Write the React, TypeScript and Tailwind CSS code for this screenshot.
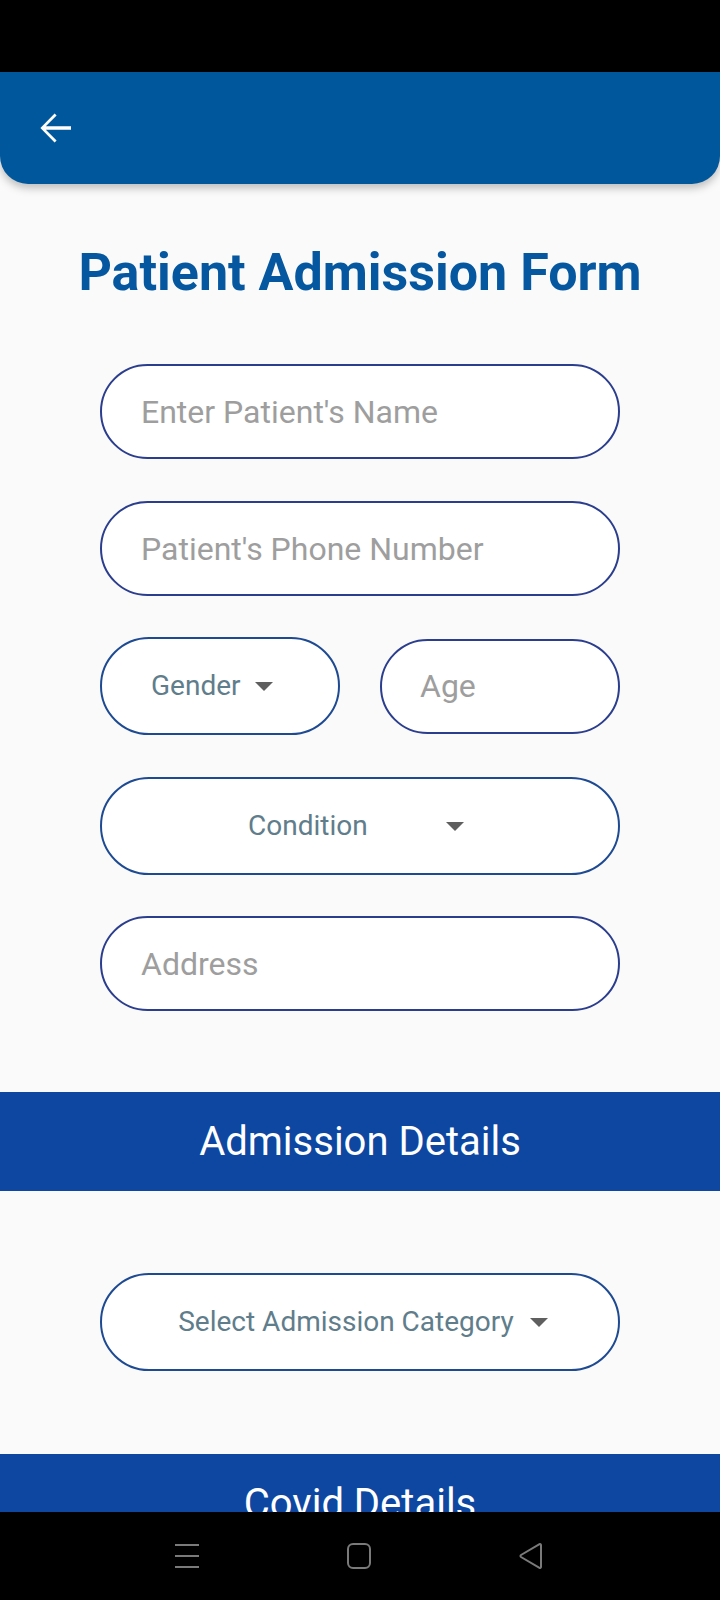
import React from "react";

const font = { fontFamily: "Roboto, 'Noto Sans', sans-serif" };

function DropArrow() {
  return (
    <svg width="18" height="9" viewBox="0 0 18 9" className="shrink-0">
      <path d="M0 0h18L9 9z" fill="#5f5f5f" />
    </svg>
  );
}

function TextField({ placeholder }: { placeholder: string }) {
  return (
    <div className="w-[520px] h-[95px] mx-auto rounded-full border-2 border-[#2b3d8d] bg-white flex items-center pl-[39px]">
      <span className="text-[32px] text-[#9e9e9e]">{placeholder}</span>
    </div>
  );
}

function Banner({ title }: { title: string }) {
  return (
    <div className="h-[99px] w-full bg-[#0d47a1] flex items-center justify-center shrink-0">
      <span className="text-[40px] text-white">{title}</span>
    </div>
  );
}

export default function App() {
  return (
    <div className="w-[720px] h-[1600px] flex flex-col bg-black overflow-hidden" style={font}>
      {/* status bar */}
      <div className="h-[72px] shrink-0 bg-black" />

      <div className="flex-1 overflow-hidden bg-[#fafafa] flex flex-col">
        <header className="h-[112px] shrink-0 bg-[#01579b] rounded-b-[28px] shadow-[0_4px_8px_rgba(0,0,0,0.25)] flex items-center pl-[31px]">
          <svg width="48" height="48" viewBox="0 0 24 24" fill="white">
            <path d="M20 11.1H7.4l5.4-5.4-1-1L4.7 12l7.1 7.3 1-1-5.4-5.4H20z" />
          </svg>
        </header>

        <h1 className="mt-[57px] h-[64px] leading-[64px] text-center text-[52px] font-bold text-[#0557a0] shrink-0">
          Patient Admission Form
        </h1>

        <div className="mt-[59px] shrink-0">
          <TextField placeholder="Enter Patient's Name" />
        </div>
        <div className="mt-[42px] shrink-0">
          <TextField placeholder="Patient's Phone Number" />
        </div>

        <div className="mt-[41px] w-[520px] mx-auto flex items-center gap-[40px] shrink-0">
          <div className="w-[240px] h-[98px] rounded-full border-2 border-[#1e4a92] bg-white flex items-center pl-[49px] gap-[14px]">
            <span className="text-[28px] text-[#607d8b]">Gender</span>
            <DropArrow />
          </div>
          <div className="w-[240px] h-[95px] rounded-full border-2 border-[#2b3d8d] bg-white flex items-center pl-[38px]">
            <span className="text-[32px] text-[#9e9e9e]">Age</span>
          </div>
        </div>

        <div className="mt-[42px] w-[520px] h-[98px] mx-auto rounded-full border-2 border-[#1e4a92] bg-white flex items-center justify-center shrink-0">
          <div className="w-[216px] mr-[8px] flex items-center justify-between">
            <span className="text-[28px] text-[#607d8b]">Condition</span>
            <DropArrow />
          </div>
        </div>

        <div className="mt-[41px] shrink-0">
          <TextField placeholder="Address" />
        </div>

        <div className="mt-[81px]">
          <Banner title="Admission Details" />
        </div>

        <div className="mt-[82px] w-[520px] h-[98px] mx-auto rounded-full border-2 border-[#1e4a92] bg-white flex items-center justify-center gap-[16px] pl-[6px] shrink-0">
          <span className="text-[28px] text-[#607d8b]">Select Admission Category</span>
          <DropArrow />
        </div>

        <div className="mt-[83px]">
          <Banner title="Covid Details" />
        </div>
      </div>

      {/* navigation bar */}
      <nav className="h-[88px] shrink-0 bg-black flex items-center justify-center gap-[146px] pr-[2px]">
        <svg width="26" height="26" viewBox="0 0 26 26" stroke="#7a7a7a" strokeWidth="2">
          <path d="M1 2h24M1 13h24M1 24h24" />
        </svg>
        <svg width="26" height="26" viewBox="0 0 26 26" fill="none" stroke="#7a7a7a" strokeWidth="2">
          <rect x="2" y="1" width="22" height="24" rx="5" />
        </svg>
        <svg width="26" height="26" viewBox="0 0 26 26" fill="none" stroke="#7a7a7a" strokeWidth="2" strokeLinejoin="round">
          <path d="M23 2v22a1 1 0 0 1-1.5.8L3 14a1.2 1.2 0 0 1 0-2L21.5 1.2A1 1 0 0 1 23 2z" />
        </svg>
      </nav>
    </div>
  );
}
